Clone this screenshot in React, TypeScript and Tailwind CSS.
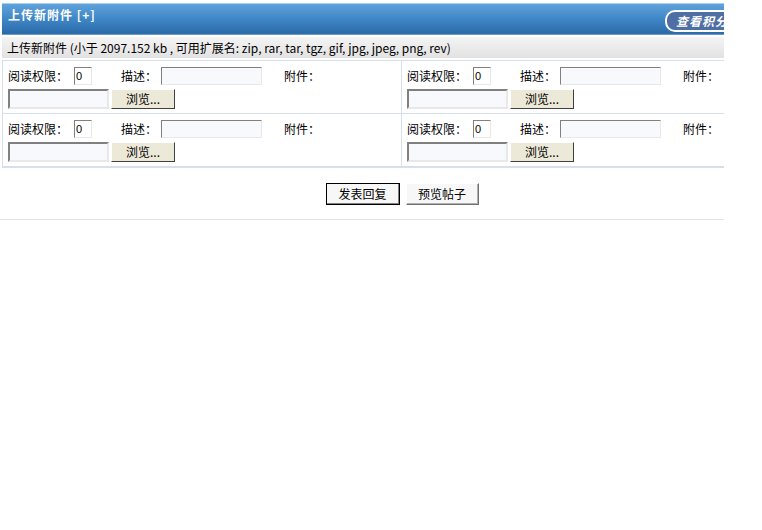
const font = { fontFamily: '"Noto Sans CJK SC", "Liberation Sans", sans-serif' };

function AttachCell({ last }: { last?: boolean }) {
  return (
    <div className={`px-[5px] pt-[5px] pb-[4px] ${last ? "" : "border-r border-[#d7e0ea]"}`}>
      <div className="flex items-center h-[20px] text-[12px] text-black">
        <span className="w-[66px]">阅读权限：</span>
        <input
          defaultValue="0"
          className="w-[18px] h-[18px] border border-t-[#808080] border-l-[#808080] border-r-[#e8e8e8] border-b-[#e8e8e8] bg-white text-[11px] leading-none px-[1px] pt-0 align-top"
          style={{ fontFamily: '"Liberation Sans", sans-serif' }}
        />
        <span className="ml-[29px] w-[40px]">描述：</span>
        <input className="w-[101px] h-[18px] border border-t-[#808080] border-l-[#808080] border-r-[#e8e8e8] border-b-[#e8e8e8] bg-[#f7f9fc]" />
        <span className="ml-[22px]">附件：</span>
      </div>
      <div className="flex items-start mt-[3px]">
        <input className="w-[101px] h-[20px] border-2 border-t-[#808080] border-l-[#808080] border-r-[#e8e8e8] border-b-[#e8e8e8] bg-[#f7f9fc]" />
        <button className="ml-[2px] w-[64px] h-[20px] bg-[#ece9d8] border border-t-[#ffffff] border-l-[#ffffff] border-r-[#404040] border-b-[#404040] text-[12px] leading-none text-black text-center">
          浏览...
        </button>
      </div>
    </div>
  );
}

export default function App() {
  return (
    <div className="w-[762px] h-[530px] bg-white overflow-hidden" style={font}>
      <div className="w-[724px] overflow-hidden pt-[3px]">
        <div className="ml-[2px] h-[32px] flex items-center justify-between border-t border-[#a8cdee] border-b border-b-[#6a9ccc] bg-gradient-to-b from-[#5fa3dc] via-[#3f86c6] to-[#2b6aa9]">
          <span className="pl-[6px] pb-[9px] text-[12px] font-bold text-white tracking-[1px]">上传新附件 [+]</span>
          <div className="mr-[-40px] h-[22px] mt-[4px] pl-[9px] pr-[8px] flex items-center rounded-[10px] border-2 border-white bg-[#4f6fa4] text-[12px] font-bold italic text-white tracking-[1px] whitespace-nowrap">
            查看积分策略
          </div>
        </div>
        <div className="ml-[2px] mt-[2px] h-[21px] flex items-center pl-[5px] bg-gradient-to-b from-[#f4f4f4] to-[#e2e2e2] text-[12px] text-black whitespace-nowrap">
          上传新附件 (小于 2097.152 kb , 可用扩展名: zip, rar, tar, tgz, gif, jpg, jpeg, png, rev)
        </div>
        <div className="ml-[2px] mt-[2px] border-l border-[#d7e0ea] border-b-2 border-b-[#d7e0ea]">
          <div className="grid grid-cols-[399px_1fr] border-t border-[#d7e0ea]">
            <AttachCell />
            <AttachCell last />
          </div>
          <div className="grid grid-cols-[399px_1fr] border-t border-[#d7e0ea]">
            <AttachCell />
            <AttachCell last />
          </div>
        </div>
        <div className="flex justify-center gap-[6px] pt-[15px] pb-[14px] pl-[80px] border-b border-[#e3e3e3]">
          <button className="w-[74px] h-[22px] bg-[#f7f7f7] border border-black shadow-[inset_-1px_-1px_0_#808080] text-[12px] leading-none text-black">
            发表回复
          </button>
          <button className="w-[73px] h-[22px] bg-[#f7f7f7] border border-t-[#ffffff] border-l-[#ffffff] border-r-[#707070] border-b-[#707070] shadow-[inset_-1px_-1px_0_#b0b0b0] text-[12px] leading-none text-black">
            预览帖子
          </button>
        </div>
      </div>
    </div>
  );
}
